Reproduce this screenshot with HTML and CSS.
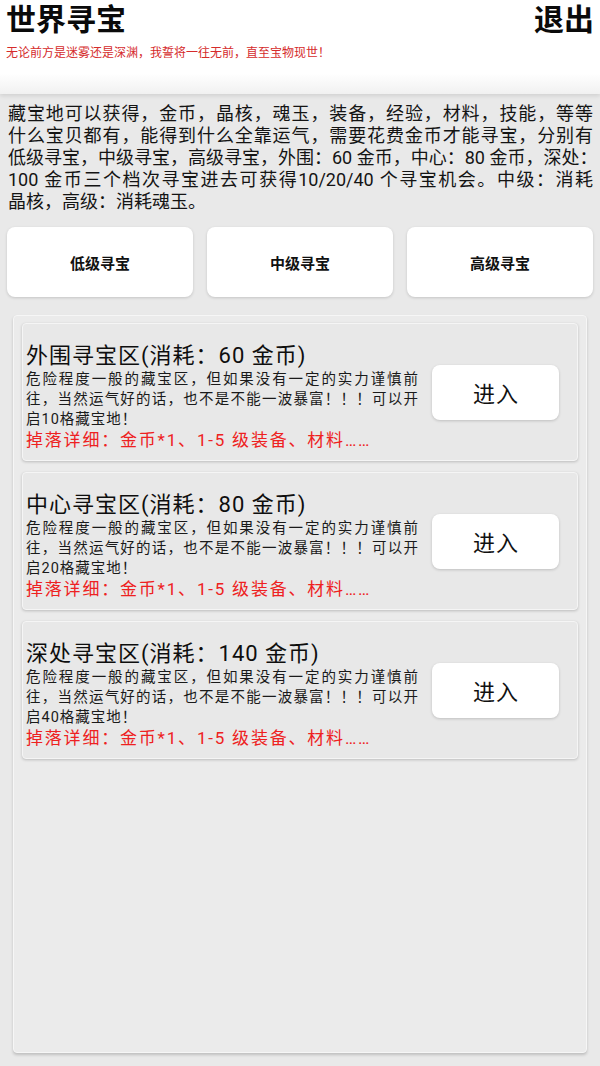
FILE: index.html
```html
<!DOCTYPE html>
<html lang="zh-CN">
<head>
<meta charset="utf-8">
<title>世界寻宝</title>
<link rel="stylesheet" href="styles.css">
</head>
<body>
<header class="header">
  <div class="title-row">
    <h1 class="title">世界寻宝</h1>
    <span class="exit">退出</span>
  </div>
  <p class="slogan">无论前方是迷雾还是深渊，我誓将一往无前，直至宝物现世！</p>
</header>

<p class="intro">
  <span class="ln">藏宝地可以获得，金币，晶核，魂玉，装备，经验，材料，技能，等等</span>
  <span class="ln">什么宝贝都有，能得到什么全靠运气，需要花费金币才能寻宝，分别有</span>
  <span class="ln">低级寻宝，中级寻宝，高级寻宝，外围：60 金币，中心：80 金币，深处：</span>
  <span class="ln">100 金币三个档次寻宝进去可获得10/20/40 个寻宝机会。中级：消耗</span>
  <span class="last">晶核，高级：消耗魂玉。</span>
</p>

<nav class="levels">
  <div class="level">低级寻宝</div>
  <div class="level">中级寻宝</div>
  <div class="level">高级寻宝</div>
</nav>

<main class="panel">
  <section class="zone">
    <div class="zone-info">
      <h2 class="zone-title">外围寻宝区(消耗：60 金币)</h2>
      <p class="zone-desc">
        <span class="ln">危险程度一般的藏宝区，但如果没有一定的实力谨慎前</span>
        <span class="ln">往，当然运气好的话，也不是不能一波暴富！！！可以开</span>
        <span class="last">启10格藏宝地！</span>
      </p>
      <p class="zone-drop">掉落详细：金币*1、1-5 级装备、材料……</p>
    </div>
    <div class="enter">进入</div>
  </section>

  <section class="zone">
    <div class="zone-info">
      <h2 class="zone-title">中心寻宝区(消耗：80 金币)</h2>
      <p class="zone-desc">
        <span class="ln">危险程度一般的藏宝区，但如果没有一定的实力谨慎前</span>
        <span class="ln">往，当然运气好的话，也不是不能一波暴富！！！可以开</span>
        <span class="last">启20格藏宝地！</span>
      </p>
      <p class="zone-drop">掉落详细：金币*1、1-5 级装备、材料……</p>
    </div>
    <div class="enter">进入</div>
  </section>

  <section class="zone">
    <div class="zone-info">
      <h2 class="zone-title">深处寻宝区(消耗：140 金币)</h2>
      <p class="zone-desc">
        <span class="ln">危险程度一般的藏宝区，但如果没有一定的实力谨慎前</span>
        <span class="ln">往，当然运气好的话，也不是不能一波暴富！！！可以开</span>
        <span class="last">启40格藏宝地！</span>
      </p>
      <p class="zone-drop">掉落详细：金币*1、1-5 级装备、材料……</p>
    </div>
    <div class="enter">进入</div>
  </section>
</main>
</body>
</html>
```

FILE: styles.css
```css
* {
  box-sizing: border-box;
}

html, body {
  margin: 0;
  padding: 0;
}

body {
  width: 600px;
  height: 1066px;
  overflow: hidden;
  background: #e9e9e9;
  color: #111;
  font-family: Roboto, "Noto Sans CJK SC", sans-serif;
}

/* ---------- header ---------- */
.header {
  height: 94px;
  padding: 3px 6px 0 6px;
  background: linear-gradient(#ffffff 0%, #ffffff 78%, #f1f1f1 100%);
  box-shadow: 0 2px 4px rgba(0, 0, 0, 0.10);
  position: relative;
}

.title-row {
  display: flex;
  justify-content: space-between;
  align-items: center;
}

.title,
.exit {
  margin: 0;
  font-size: 30px;
  line-height: 34px;
  font-weight: 700;
  color: #0a0a0a;
}

.slogan {
  margin: 8px 0 0 0;
  font-size: 12px;
  line-height: 16px;
  color: #d52b2b;
}

/* ---------- intro ---------- */
.intro {
  margin: 9px 0 0 0;
  padding: 0 7px 0 8px;
  font-size: 18px;
  line-height: 22px;
  color: #141414;
}

.ln {
  display: block;
  white-space: nowrap;
  text-align: justify;
  text-align-last: justify;
}

.last {
  display: block;
  white-space: nowrap;
}

/* ---------- level buttons ---------- */
.levels {
  display: flex;
  gap: 14px;
  margin-top: 14px;
  padding: 0 7px;
}

.level {
  flex: 1;
  height: 70px;
  display: flex;
  align-items: center;
  justify-content: center;
  background: #ffffff;
  border-radius: 8px;
  box-shadow: 0 1px 3px rgba(0, 0, 0, 0.16);
  font-size: 15px;
  font-weight: 700;
  color: #111;
}

/* ---------- panel ---------- */
.panel {
  margin: 18px 13px 0 13px;
  height: 738px;
  padding: 7px 8px 0 8px;
  background: #ebebeb;
  border: 1px solid #f6f6f6;
  border-radius: 4px;
  box-shadow: 0 2px 3px rgba(0, 0, 0, 0.18);
  display: flex;
  flex-direction: column;
  gap: 11px;
}

.zone {
  height: 138px;
  display: flex;
  align-items: center;
  justify-content: space-between;
  padding: 0 18px 0 3px;
  background: #e8e8e8;
  border: 1px solid #f5f5f5;
  border-radius: 4px;
  box-shadow: 0 1px 3px rgba(0, 0, 0, 0.2);
}

.zone-info {
  align-self: flex-start;
  width: 393px;
  padding-top: 18px;
}

.zone-title {
  margin: 0;
  font-size: 22px;
  line-height: 28px;
  font-weight: 400;
  letter-spacing: 1px;
  color: #0e0e0e;
  white-space: nowrap;
}

.zone-desc {
  margin: 0;
  font-size: 14.5px;
  line-height: 20px;
  letter-spacing: 1px;
  color: #1a1a1a;
}

.zone-drop {
  margin: 0;
  font-size: 17px;
  line-height: 20px;
  letter-spacing: 1.8px;
  color: #ee2121;
  white-space: nowrap;
}

.enter {
  width: 127px;
  height: 55px;
  display: flex;
  align-items: center;
  justify-content: center;
  padding-left: 1px;
  background: #ffffff;
  border-radius: 8px;
  box-shadow: 0 1px 3px rgba(0, 0, 0, 0.18);
  font-size: 22px;
  letter-spacing: 1px;
  color: #111;
}
```
